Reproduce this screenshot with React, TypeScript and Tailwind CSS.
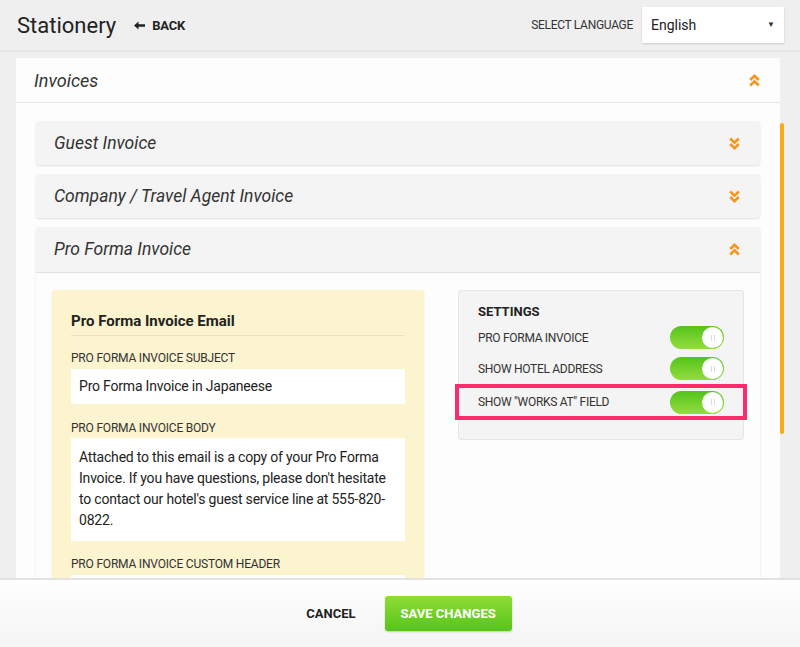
import React from 'react';

const font = { fontFamily: 'Roboto, "Liberation Sans", sans-serif' };

function DoubleChevron({ up }: { up?: boolean }) {
  return (
    <svg width="11" height="13" viewBox="0 0 11 13" className={up ? '' : 'rotate-180'}>
      <polyline points="1.2,6 5.5,1.9 9.8,6" fill="none" stroke="#f7941d" strokeWidth="2.6" />
      <polyline points="1.2,11.5 5.5,7.4 9.8,11.5" fill="none" stroke="#f7941d" strokeWidth="2.6" />
    </svg>
  );
}

function BackArrow() {
  return (
    <svg width="11" height="9" viewBox="0 0 11 9">
      <path d="M0 4.5 L4.5 0.5 L4.5 3.3 L11 3.3 L11 5.7 L4.5 5.7 L4.5 8.5 Z" fill="#222" />
    </svg>
  );
}

function Toggle() {
  return (
    <div className="relative h-[23px] w-[54px] rounded-full bg-gradient-to-b from-[#52c418] to-[#93dc3e]">
      <div className="absolute right-[1px] top-[1px] flex h-[21px] w-[21px] items-center justify-center rounded-full bg-white">
        <div className="h-[6px] w-[4px] border-x border-[#dcdcdc]" />
      </div>
    </div>
  );
}

function SubAccordion({ title, open }: { title: string; open?: boolean }) {
  return (
    <div className="flex h-[44px] items-center justify-between rounded-[3px] bg-[#f4f4f4] pl-[18px] pr-[20px] shadow-[0_1px_2px_rgba(0,0,0,0.12)]">
      <span className="text-[17.5px] italic text-[#333]">{title}</span>
      <DoubleChevron up={open} />
    </div>
  );
}

function SettingRow({ label, highlight }: { label: string; highlight?: boolean }) {
  return (
    <div
      className={`flex items-center justify-between ${
        highlight ? '-mx-[23px] h-[36px] border-4 border-[#fb2c6c] px-[19px]' : 'h-[31px]'
      }`}
    >
      <span className="text-[12px] uppercase tracking-[-0.3px] text-[#333]">{label}</span>
      <Toggle />
    </div>
  );
}

export default function App() {
  return (
    <div style={font} className="relative h-[647px] w-[800px] overflow-hidden bg-[#efefef] text-[#333]">
      {/* top bar */}
      <div className="flex h-[52px] items-center justify-between border-b-2 border-[#e4e4e4] pl-[17px] pr-[16px]">
        <div className="flex items-center gap-[18px]">
          <h1 className="text-[22px] text-[#222]">Stationery</h1>
          <button className="mt-[1px] flex items-center gap-[7px] text-[13px] font-bold tracking-[-0.2px] text-[#222]">
            <BackArrow />
            BACK
          </button>
        </div>
        <div className="flex items-center gap-[9px]">
          <span className="text-[12px] uppercase tracking-[-0.3px] text-[#333]">Select Language</span>
          <div className="flex h-[36px] w-[142px] items-center justify-between bg-white pl-[9px] pr-[9px] shadow-[0_1px_2px_rgba(0,0,0,0.15)]">
            <span className="text-[14px] text-[#222]">English</span>
            <span className="text-[8px] text-[#333]">▼</span>
          </div>
        </div>
      </div>

      {/* main card */}
      <div className="mx-[16px] mt-[6px] w-[764px] bg-[#fdfdfd]">
        <div className="flex h-[45px] items-center justify-between border-b border-[#e6e6e6] pl-[18px] pr-[20px]">
          <span className="text-[18px] italic text-[#333]">Invoices</span>
          <DoubleChevron up />
        </div>
        <div className="flex flex-col gap-[9px] px-[20px] pt-[18px]">
          <SubAccordion title="Guest Invoice" />
          <SubAccordion title="Company / Travel Agent Invoice" />
          <div className="rounded-[3px] shadow-[0_1px_2px_rgba(0,0,0,0.12)]">
            <div className="flex h-[46px] items-center justify-between border-b border-[#e2e2e2] bg-[#f4f4f4] pl-[18px] pr-[20px]">
              <span className="text-[17.5px] italic text-[#333]">Pro Forma Invoice</span>
              <DoubleChevron up />
            </div>
            <div className="flex gap-[34px] bg-[#fdfdfd] px-[16px] pt-[17px]">
              {/* email card */}
              <div className="w-[372px] rounded-[3px] bg-[#fcf3cf] px-[19px] pb-[20px] pt-[20px] shadow-[0_1px_2px_rgba(0,0,0,0.1)]">
                <h2 className="border-b border-[#ece2b9] pb-[3px] text-[15px] font-bold leading-[22px] text-[#222]">
                  Pro Forma Invoice Email
                </h2>
                <div className="mt-[14px] text-[12px] uppercase leading-[16px] tracking-[-0.2px] text-[#333]">Pro Forma Invoice Subject</div>
                <div className="mt-[3px] flex h-[35px] items-center bg-white px-[8px] text-[14px] tracking-[-0.2px] text-[#222]">
                  Pro Forma Invoice in Japaneese
                </div>
                <div className="mt-[16px] text-[12px] uppercase leading-[16px] tracking-[-0.2px] text-[#333]">Pro Forma Invoice Body</div>
                <div className="mt-[2px] bg-white px-[8px] pb-[10px] pt-[9px] text-[14px] leading-[21px] tracking-[-0.2px] text-[#222]">
                  Attached to this email is a copy of your Pro Forma Invoice. If you have questions, please don't hesitate to contact our hotel's guest service line at 555-820-0822.
                </div>
                <div className="mt-[15px] text-[12px] uppercase leading-[16px] tracking-[-0.2px] text-[#333]">Pro Forma Invoice Custom Header</div>
                <div className="mt-[3px] h-[35px] bg-white" />
              </div>
              {/* settings */}
              <div className="w-[286px] self-start rounded-[3px] border border-[#e6e6e6] bg-[#f4f4f4] px-[19px] pb-[19px] pt-[11px]">
                <div className="text-[13px] font-bold uppercase leading-[20px] text-[#222]">Settings</div>
                <SettingRow label="Pro Forma Invoice" />
                <SettingRow label="Show Hotel Address" />
                <SettingRow label={'Show "Works At" Field'} highlight />
              </div>
            </div>
          </div>
        </div>
      </div>

      {/* scroll indicator */}
      <div className="absolute right-[16px] top-[123px] h-[311px] w-[4px] rounded-full bg-[#f9a919]" />

      {/* footer */}
      <div className="absolute bottom-0 left-0 right-0 flex h-[69px] items-center justify-center gap-[29px] border-t-2 border-[#e2e2e2] bg-gradient-to-b from-white to-[#f4f4f4] pl-[18px]">
        <button className="text-[13px] font-bold uppercase text-[#222]">Cancel</button>
        <button className="h-[35px] w-[127px] rounded-[3px] bg-gradient-to-b from-[#8edd34] to-[#54c41b] text-[13px] font-bold uppercase text-white shadow-[0_1px_2px_rgba(0,0,0,0.2)]">
          Save Changes
        </button>
      </div>
    </div>
  );
}
